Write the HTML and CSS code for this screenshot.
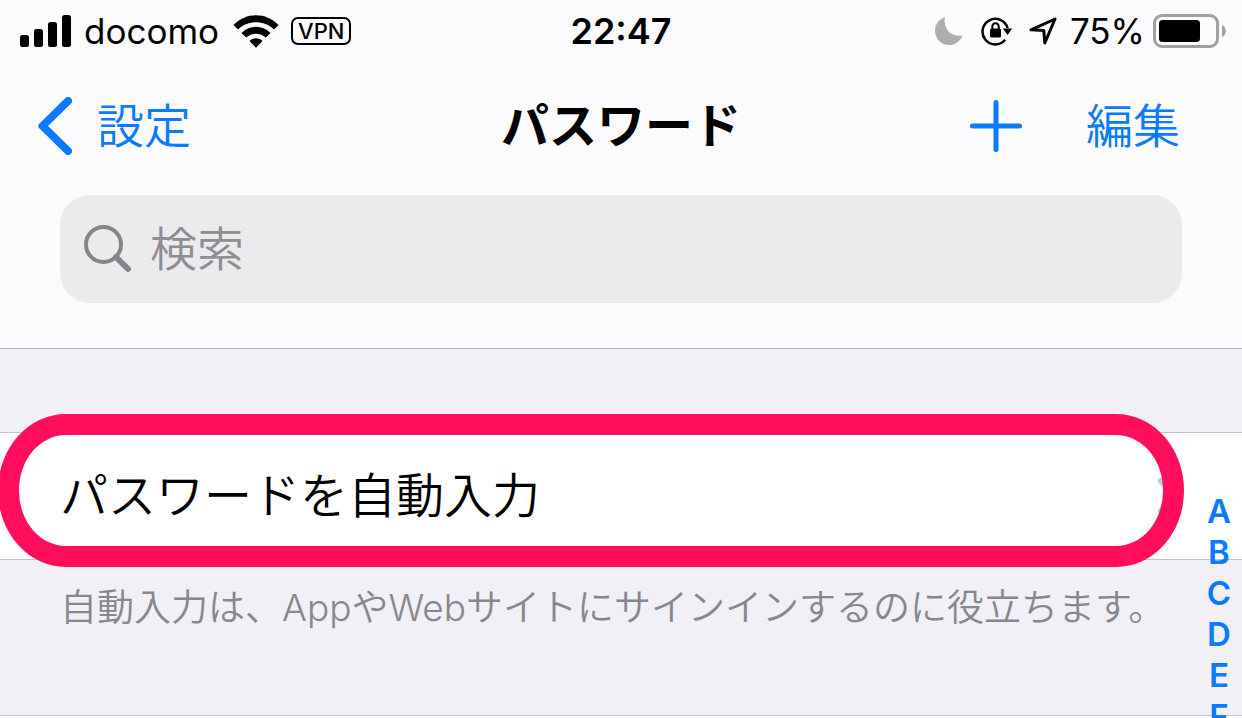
FILE: index.html
```html
<!DOCTYPE html>
<html lang="ja">
<head>
  <meta charset="UTF-8">
  <meta name="viewport" content="width=device-width, initial-scale=1">
  <title>パスワード</title>
  <link rel="stylesheet" href="styles.css">
</head>
<body>
  <header class="header">
    <div class="status-bar">
      <div class="status-left">
        <svg class="signal" width="52" height="32" viewBox="0 0 52 32">
          <rect x="0" y="20" width="9" height="12" rx="2.5"/>
          <rect x="14" y="14" width="9" height="18" rx="2.5"/>
          <rect x="28" y="7" width="9" height="25" rx="2.5"/>
          <rect x="42" y="0" width="9" height="32" rx="2.5"/>
        </svg>
        <span class="carrier">docomo</span>
        <svg class="wifi" width="46" height="33" viewBox="0 0 46 33">
          <path d="M0.5 10 C13 -3 33 -3 45.500 10 L41 14.500 C31 4.800 15 4.800 5 14.500 Z"/>
          <path d="M8.500 18 C16.500 9.800 29.500 9.800 37.500 18 L32.800 22.600 C27.500 17.400 18.500 17.400 13.200 22.600 Z"/>
          <path d="M16.500 26 C20 22.400 26 22.400 29.500 26 L23 32.800 Z"/>
        </svg>
        <span class="vpn">VPN</span>
      </div>
      <time class="clock">22:47</time>
      <div class="status-right">
        <svg class="moon" width="28" height="28" viewBox="0 0 28 28">
          <path d="M10 0.300 C8 9 13.500 20.500 27.600 18.400 C25 24.500 20 28 14 28 C6.300 28 0 21.800 0 14 C0 7.600 4 2 10 0.300 Z"/>
        </svg>
        <svg class="lock" width="32" height="30" viewBox="0 0 32 30">
          <path class="line" d="M26.600 12 A12.800 12.800 0 1 0 24.200 23.800"/>
          <path d="M21.800 12.500 H31.200 L26.600 19 Z"/>
          <rect x="9" y="12.500" width="11" height="9" rx="1.500"/>
          <path class="shackle" d="M11.300 13 V10.500 A3.200 3.200 0 0 1 17.700 10.500 V13"/>
        </svg>
        <svg class="arrow" width="28" height="28" viewBox="0 0 28 28">
          <path d="M26 2 L2 12.800 L14.800 13.600 L15.800 26 Z"/>
        </svg>
        <span class="percent">75%</span>
        <svg class="battery" width="74" height="34" viewBox="0 0 74 34">
          <rect class="shell" x="1.500" y="1.500" width="63" height="31" rx="7.500"/>
          <rect x="6" y="6" width="41" height="22" rx="3.500"/>
          <path class="cap" d="M69 11 C74 13 74 21 69 23 Z"/>
        </svg>
      </div>
    </div>

    <nav class="nav-bar">
      <a class="back" href="#">
        <svg width="34" height="58" viewBox="0 0 34 58">
          <path d="M30 4 L4.500 29 L30 54"/>
        </svg>
        <span>設定</span>
      </a>
      <h1 class="title">パスワード</h1>
      <div class="actions">
        <button class="add" type="button" aria-label="追加">
          <svg width="52" height="52" viewBox="0 0 52 52">
            <path d="M26 2.500 V49.500 M2.500 26 H49.500"/>
          </svg>
        </button>
        <button class="edit" type="button">編集</button>
      </div>
    </nav>

    <label class="search">
      <svg width="48" height="48" viewBox="0 0 48 48">
        <circle cx="19.500" cy="19.500" r="17.500"/>
        <path d="M32 32 L44 44"/>
      </svg>
      <input type="search" placeholder="検索" aria-label="検索">
    </label>
  </header>

  <main class="content">
    <section class="group">
      <a class="row" href="#">
        <span>パスワードを自動入力</span>
        <svg width="24" height="36" viewBox="0 0 24 36">
          <path d="M3 3 L18 18 L3 33"/>
        </svg>
      </a>
      <div class="highlight"></div>
    </section>
    <p class="note">自動入力は、AppやWebサイトにサインインするのに役立ちます。</p>
    <section class="group next"></section>
  </main>

  <nav class="index">
    <a href="#">A</a>
    <a href="#">B</a>
    <a href="#">C</a>
    <a href="#">D</a>
    <a href="#">E</a>
    <a href="#">F</a>
  </nav>
</body>
</html>
```

FILE: styles.css
```css
* {
  box-sizing: border-box;
}

body {
  position: relative;
  height: 100vh;
  margin: 0;
  font-family: Inter, 'Noto Sans CJK JP', sans-serif;
  font-size: 47px;
  font-weight: 350;
  line-height: 50px;
  color: #000;
  background: #f1f0f6;
  overflow: hidden;
}

a {
  color: #0a7aff;
  text-decoration: none;
}

button {
  padding: 0;
  border: none;
  background: none;
  font: inherit;
  color: #0a7aff;
  cursor: pointer;
}

svg {
  display: block;
  flex-shrink: 0;
}

.header {
  padding-bottom: 45px;
  background: #fbfbfd;
  border-bottom: 1px solid #b4b4b8;
}

/* status bar */
.status-bar {
  display: grid;
  grid-template-columns: 1fr auto 1fr;
  align-items: center;
  height: 62px;
  font-size: 35px;
  font-weight: 400;
}

.status-left,
.status-right {
  display: flex;
  align-items: center;
}

.status-left {
  padding-left: 20px;
}

.status-right {
  justify-content: flex-end;
  padding-right: 15px;
}

.carrier {
  margin: 0 14px 0 12px;
}

.vpn {
  margin-left: 12px;
  padding: 0 5px;
  border: 2px solid #000;
  border-radius: 7px;
  font-size: 22px;
  font-weight: 500;
  line-height: 24px;
}

.clock {
  font-size: 36px;
  font-weight: 600;
}

.moon {
  margin-right: 18px;
  fill: #aeaeb0;
}

.lock {
  margin-right: 16px;
}

.lock .line {
  fill: none;
  stroke: #000;
  stroke-width: 2.5;
}

.lock .shackle {
  fill: none;
  stroke: #000;
  stroke-width: 2;
}

.arrow {
  margin-right: 13px;
  fill: none;
  stroke: #000;
  stroke-width: 3;
  stroke-linejoin: round;
}

.percent {
  margin-right: 8px;
}

.battery .shell {
  fill: none;
  stroke: #a0a0a2;
  stroke-width: 3;
}

.battery .cap {
  fill: #a0a0a2;
}

/* navigation bar */
.nav-bar {
  display: grid;
  grid-template-columns: 1fr auto 1fr;
  align-items: center;
  height: 128px;
}

.back {
  display: flex;
  align-items: center;
  gap: 25px;
  padding-left: 38px;
}

.back svg {
  fill: none;
  stroke: #0a7aff;
  stroke-width: 8;
  stroke-linecap: round;
  stroke-linejoin: round;
}

.title {
  margin: 0;
  font-size: 48px;
  font-weight: 700;
}

.actions {
  display: flex;
  align-items: center;
  justify-content: flex-end;
  gap: 64px;
  padding-right: 62px;
}

.add svg {
  fill: none;
  stroke: #0a7aff;
  stroke-width: 5;
  stroke-linecap: round;
}

/* search */
.search {
  display: flex;
  align-items: center;
  gap: 18px;
  height: 108px;
  margin: 5px 60px 0;
  padding: 0 24px;
  border-radius: 30px;
  background: #ebebed;
}

.search svg {
  fill: none;
  stroke: #858589;
  stroke-width: 4;
}

.search path {
  stroke-width: 6;
  stroke-linecap: round;
}

.search input {
  flex: 1;
  min-width: 0;
  padding: 0;
  border: none;
  outline: none;
  background: none;
  font: inherit;
}

.search input::placeholder {
  color: #8e8e92;
}

/* list */
.content {
  padding-top: 83px;
}

.group {
  position: relative;
  border-top: 1px solid #c6c6ca;
  border-bottom: 1px solid #c6c6ca;
  background: #fff;
}

.row {
  display: flex;
  align-items: center;
  justify-content: space-between;
  height: 126px;
  padding: 0 60px;
  font-size: 48px;
  color: #000;
}

.row svg {
  fill: none;
  stroke: #c5c5c9;
  stroke-width: 6;
  stroke-linecap: round;
  stroke-linejoin: round;
}

.highlight {
  position: absolute;
  top: -19px;
  right: 58px;
  bottom: -8px;
  left: -2px;
  border: 21px solid #ff0f5b;
  border-radius: 68px / 76px;
  pointer-events: none;
}

.note {
  margin: 0;
  padding: 20px 60px 79px;
  font-size: 37px;
  line-height: 56px;
  color: #87878c;
}

.next {
  min-height: 126px;
}

/* letter index */
.index {
  position: absolute;
  top: 491px;
  right: 0;
  width: 46px;
  display: flex;
  flex-direction: column;
  text-align: center;
  font-size: 33px;
  font-weight: 600;
  line-height: 41px;
}
```
